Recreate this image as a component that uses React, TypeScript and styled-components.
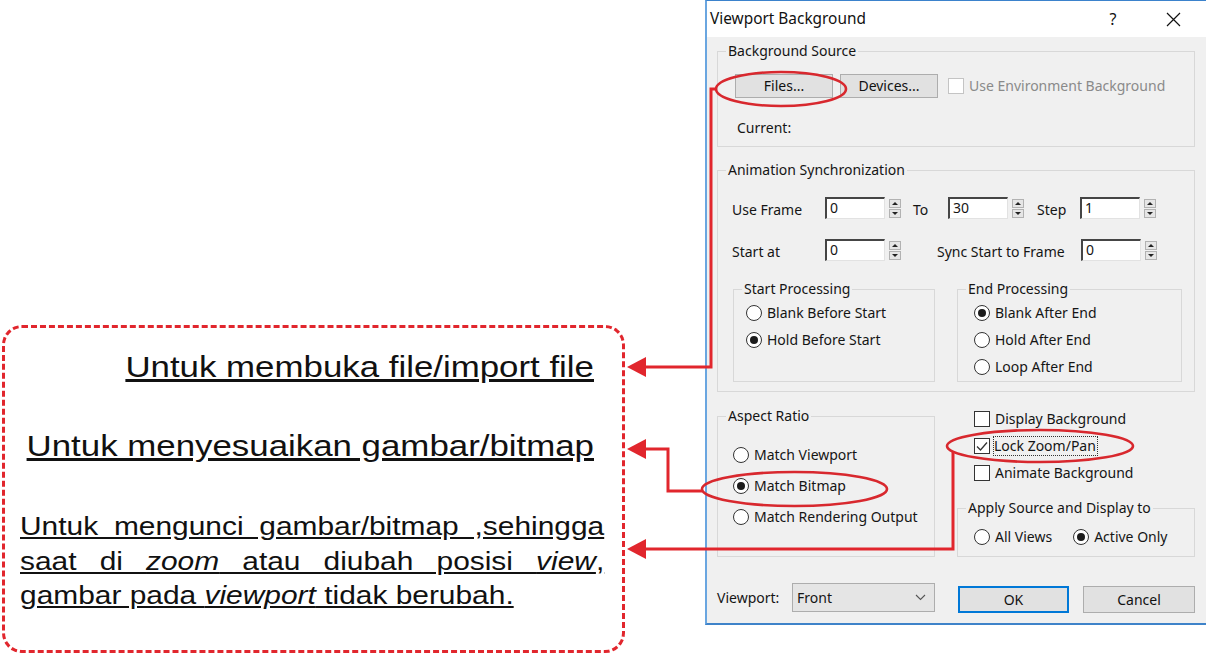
import * as React from "react";
import styled, { createGlobalStyle } from "styled-components";

const RED = "#e1262d";

const GlobalStyle = createGlobalStyle`
  html, body {
    margin: 0;
    padding: 0;
    background: #ffffff;
    overflow: hidden;
  }
  #root {
    width: 1206px;
    height: 657px;
  }
`;

const Check = () => (
  <svg width="14" height="14" viewBox="0 0 14 14">
    <path d="M2 7.5 L5.5 11 L12 3.5" fill="none" stroke="#333" strokeWidth="1.3" />
  </svg>
);

const Radio = ({ on, children }: { on?: boolean; children: React.ReactNode }) => (
  <Option>
    <RadioCircle $on={on} />
    <span>{children}</span>
  </Option>
);

const Field = (props: { label: string; w: number; ml?: number; value: string }) => (
  <>
    <FieldLabel $w={props.w} $ml={props.ml || 0}>
      {props.label}
    </FieldLabel>
    <ValueBox>{props.value}</ValueBox>
    <Spinner>
      <SpinHalf />
      <SpinHalf $down />
    </Spinner>
  </>
);

export default function App() {
  return (
    <Page>
      <GlobalStyle />
      <LeftColumn>
        <NoteBox>
          <Note $gap={0}>Untuk membuka file/import file</Note>
          <Note $gap={43}>Untuk menyesuaikan gambar/bitmap</Note>
          <NoteParagraph>
            <NoteLine>Untuk mengunci gambar/bitmap ,sehingga</NoteLine>
            <NoteLine>
              saat di <i>zoom</i> atau diubah posisi <i>view</i>,
            </NoteLine>
            <NoteLine $last>
              gambar pada <i>viewport</i> tidak berubah.
            </NoteLine>
          </NoteParagraph>
        </NoteBox>
      </LeftColumn>

      <Dialog>
        <TitleBar>
          <TitleText>Viewport Background</TitleText>
          <TitleButton $mr={14}>?</TitleButton>
          <TitleButton $mr={0}>
            <svg width="15" height="15" viewBox="0 0 15 15">
              <path d="M1 1 L14 14 M14 1 L1 14" stroke="#111" strokeWidth="1.2" />
            </svg>
          </TitleButton>
        </TitleBar>

        <Body>
          <Group>
            <Legend>Background Source</Legend>
            <SourceRow>
              <PushButton $w={98} $h={24}>Files...</PushButton>
              <PushButton $w={98} $h={24} style={{ marginLeft: 7 }}>
                Devices...
              </PushButton>
              <CheckBox $disabled style={{ marginLeft: 10 }} />
              <DisabledText>Use Environment Background</DisabledText>
            </SourceRow>
            <CurrentLine>Current:</CurrentLine>
          </Group>

          <Group $mt={14}>
            <Legend>Animation Synchronization</Legend>
            <SyncBody>
              <SpinRow $mt={0}>
                <Field label="Use Frame" w={93} value="0" />
                <Field label="To" w={35} ml={12} value="30" />
                <Field label="Step" w={43} ml={13} value="1" />
              </SpinRow>
              <SpinRow $mt={20}>
                <Field label="Start at" w={93} value="0" />
                <Field label="Sync Start to Frame" w={144} ml={36} value="0" />
              </SpinRow>
              <ProcessRow>
                <Group $w={202}>
                  <Legend>Start Processing</Legend>
                  <OptionList $pad="6px 0 5px 12px" $gap={9}>
                    <Radio>Blank Before Start</Radio>
                    <Radio on>Hold Before Start</Radio>
                  </OptionList>
                </Group>
                <Group $w={225}>
                  <Legend>End Processing</Legend>
                  <OptionList $pad="6px 0 5px 16px" $gap={9}>
                    <Radio on>Blank After End</Radio>
                    <Radio>Hold After End</Radio>
                    <Radio>Loop After End</Radio>
                  </OptionList>
                </Group>
              </ProcessRow>
            </SyncBody>
          </Group>

          <LowerRow>
            <Group $w={218}>
              <Legend>Aspect Ratio</Legend>
              <OptionList $pad="21px 0 0 15px" $gap={13}>
                <Radio>Match Viewport</Radio>
                <Radio on>Match Bitmap</Radio>
                <Radio>Match Rendering Output</Radio>
              </OptionList>
            </Group>
            <RightColumn>
              <OptionList $pad="0 0 0 17px" $gap={9}>
                <Option>
                  <CheckBox />
                  <span>Display Background</span>
                </Option>
                <Option>
                  <CheckBox>
                    <Check />
                  </CheckBox>
                  <FocusText>Lock Zoom/Pan</FocusText>
                </Option>
                <Option>
                  <CheckBox />
                  <span>Animate Background</span>
                </Option>
              </OptionList>
              <Group $mt={17}>
                <Legend>Apply Source and Display to</Legend>
                <ApplyRow>
                  <Radio>All Views</Radio>
                  <Radio on>Active Only</Radio>
                </ApplyRow>
              </Group>
            </RightColumn>
          </LowerRow>

          <BottomRow>
            <BottomLabel>Viewport:</BottomLabel>
            <Dropdown>
              <span>Front</span>
              <svg width="11" height="7" viewBox="0 0 11 7">
                <path d="M1 1 L5.5 5.5 L10 1" fill="none" stroke="#555" strokeWidth="1.1" />
              </svg>
            </Dropdown>
            <PushButton $w={111} $h={27} $default style={{ marginLeft: 23 }}>
              OK
            </PushButton>
            <PushButton $w={112} $h={27} style={{ marginLeft: 14 }}>
              Cancel
            </PushButton>
          </BottomRow>
        </Body>
      </Dialog>

      <Overlay width="1206" height="657" viewBox="0 0 1206 657">
        <g fill="none" stroke="#d8282e" strokeWidth="2.6">
          <ellipse cx="781" cy="89" rx="65" ry="17" />
          <ellipse cx="794.5" cy="489" rx="92.5" ry="17" />
          <ellipse cx="1040" cy="446" rx="93" ry="16" />
        </g>
        <g fill="none" stroke={RED} strokeWidth="3">
          <polyline points="716,89 711,89 711,367 644,367" />
          <polyline points="702,491 668,491 668,449 644,449" />
          <polyline points="953,452 953,549 644,549" />
        </g>
        <g fill={RED}>
          <polygon points="627,367 646,357 646,377" />
          <polygon points="627,449 646,439 646,459" />
          <polygon points="627,549 646,539 646,559" />
        </g>
      </Overlay>
    </Page>
  );
}

const Page = styled.div`
  position: relative;
  display: flex;
  align-items: flex-start;
  width: 1206px;
  height: 657px;
  overflow: hidden;
`;

const LeftColumn = styled.div`
  flex: none;
  width: 705px;
  padding: 325px 0 0 2px;
  box-sizing: border-box;
`;

const NoteBox = styled.div`
  box-sizing: border-box;
  width: 623px;
  height: 328px;
  border: 3px dashed ${RED};
  border-radius: 20px;
  padding: 21px 28px 0 15px;
  font-family: "Liberation Sans", Arial, sans-serif;
  color: #111;
`;

const Note = styled.p<{ $gap: number }>`
  margin: ${(p) => p.$gap}px 0 0;
  font-size: 30.3px;
  line-height: 36px;
  text-align: right;
  text-decoration: underline;
  transform: scaleX(1.15);
  transform-origin: right center;
`;

const NoteParagraph = styled.div`
  margin-top: 45px;
  width: 508px;
  font-size: 26px;
  line-height: 34.5px;
  transform: scaleX(1.15);
  transform-origin: left center;
`;

const NoteLine = styled.div<{ $last?: boolean }>`
  text-align: ${(p) => (p.$last ? "left" : "justify")};
  text-align-last: ${(p) => (p.$last ? "left" : "justify")};
  text-decoration: underline;
`;

const Dialog = styled.section`
  flex: none;
  box-sizing: border-box;
  width: 503px;
  height: 625px;
  display: flex;
  flex-direction: column;
  background: #f0f0f0;
  border-top: 1px solid #3b82cc;
  border-bottom: 2px solid #3f83c9;
  border-left: 2px solid #6aa6e0;
  font-family: "Noto Sans", "Open Sans", sans-serif;
  font-size: 14px;
  line-height: 18px;
  color: #151515;
`;

const TitleBar = styled.div`
  height: 36px;
  flex: none;
  display: flex;
  align-items: center;
  background: #ffffff;
  padding: 0 12px 0 3px;
`;

const TitleText = styled.div`
  flex: 1;
  font-size: 15.4px;
  color: #111;
`;

const TitleButton = styled.div<{ $mr: number }>`
  width: 46px;
  height: 36px;
  margin-right: ${(p) => p.$mr}px;
  display: flex;
  align-items: center;
  justify-content: center;
  font-size: 16px;
  color: #111;
`;

const Body = styled.div`
  display: flex;
  flex-direction: column;
  padding: 5px 13px 0 10px;
`;

const Group = styled.fieldset<{ $w?: number; $mt?: number }>`
  margin: ${(p) => p.$mt || 0}px 0 0;
  padding: 0;
  min-width: 0;
  box-sizing: border-box;
  border: 1px solid #d8d8d8;
  ${(p) => (p.$w ? `width: ${p.$w}px; flex: none;` : "")}
`;

const Legend = styled.legend`
  margin-left: 8px;
  padding: 0 2px;
  line-height: 18px;
`;

const SourceRow = styled.div`
  display: flex;
  align-items: center;
  padding: 14px 0 0 17px;
`;

const PushButton = styled.div<{ $w: number; $h: number; $default?: boolean }>`
  flex: none;
  box-sizing: border-box;
  width: ${(p) => p.$w}px;
  height: ${(p) => p.$h}px;
  display: flex;
  align-items: center;
  justify-content: center;
  background: #e1e1e1;
  border: ${(p) => (p.$default ? "2px solid #0078d7" : "1px solid #adadad")};
  color: #111;
`;

const CheckBox = styled.span<{ $disabled?: boolean }>`
  flex: none;
  box-sizing: border-box;
  width: 16px;
  height: 16px;
  display: flex;
  align-items: center;
  justify-content: center;
  background: #ffffff;
  border: 1px solid ${(p) => (p.$disabled ? "#c4c4c4" : "#333333")};
`;

const DisabledText = styled.span`
  margin-left: 5px;
  color: #8a8a8a;
`;

const CurrentLine = styled.div`
  padding: 21px 0 9px 19px;
`;

const SyncBody = styled.div`
  padding: 18px 0 9px 14px;
`;

const SpinRow = styled.div<{ $mt: number }>`
  display: flex;
  align-items: center;
  height: 22px;
  margin-top: ${(p) => p.$mt}px;
`;

const FieldLabel = styled.span<{ $w: number; $ml: number }>`
  flex: none;
  width: ${(p) => p.$w}px;
  margin-left: ${(p) => p.$ml}px;
  padding-top: 4px;
  white-space: nowrap;
`;

const ValueBox = styled.span`
  flex: none;
  box-sizing: border-box;
  width: 60px;
  height: 22px;
  padding: 0 0 0 3px;
  line-height: 17px;
  background: #ffffff;
  border-top: 2px solid #454545;
  border-left: 2px solid #454545;
  border-right: 1px solid #e2e2e2;
  border-bottom: 1px solid #e2e2e2;
`;

const Spinner = styled.span`
  flex: none;
  width: 12px;
  height: 19px;
  margin-left: 4px;
  display: flex;
  flex-direction: column;
  gap: 1px;
`;

const SpinHalf = styled.span<{ $down?: boolean }>`
  flex: 1;
  display: flex;
  align-items: center;
  justify-content: center;
  background: #e6e6e6;
  border: 1px solid #b2b2b2;

  &::after {
    content: "";
    border-left: 3px solid transparent;
    border-right: 3px solid transparent;
    ${(p) => (p.$down ? "border-top: 3px solid #222;" : "border-bottom: 3px solid #222;")}
  }
`;

const ProcessRow = styled.div`
  display: flex;
  align-items: stretch;
  gap: 22px;
  margin: 19px 0 0 1px;
`;

const OptionList = styled.div<{ $pad: string; $gap: number }>`
  display: flex;
  flex-direction: column;
  gap: ${(p) => p.$gap}px;
  padding: ${(p) => p.$pad};
`;

const Option = styled.div`
  display: flex;
  align-items: center;
  gap: 5px;
  height: 18px;
  white-space: nowrap;
`;

const RadioCircle = styled.span<{ $on?: boolean }>`
  flex: none;
  box-sizing: border-box;
  width: 16px;
  height: 16px;
  border: 1px solid #333333;
  border-radius: 50%;
  background: #ffffff;
  display: flex;
  align-items: center;
  justify-content: center;

  &::after {
    content: "";
    width: 8px;
    height: 8px;
    border-radius: 50%;
    background: ${(p) => (p.$on ? "#1c1c1c" : "transparent")};
  }
`;

const FocusText = styled.span`
  outline: 1px dotted #333;
  outline-offset: 0;
  padding: 0 1px 0 0;
  margin-left: -1px;
`;

const LowerRow = styled.div`
  display: flex;
  align-items: stretch;
  gap: 22px;
  margin-top: 15px;
`;

const RightColumn = styled.div`
  flex: none;
  width: 238px;
  display: flex;
  flex-direction: column;
  padding-top: 3px;
`;

const ApplyRow = styled.div`
  display: flex;
  gap: 21px;
  padding: 11px 0 10px 16px;
`;

const BottomRow = styled.div`
  display: flex;
  align-items: flex-end;
  height: 30px;
  margin-top: 26px;
`;

const BottomLabel = styled.span`
  flex: none;
  width: 75px;
  align-self: center;
`;

const Dropdown = styled.div`
  flex: none;
  box-sizing: border-box;
  width: 143px;
  height: 29px;
  margin-bottom: 1px;
  display: flex;
  align-items: center;
  justify-content: space-between;
  padding: 0 8px 0 4px;
  background: #e5e5e5;
  border: 1px solid #adadad;
`;

const Overlay = styled.svg`
  position: absolute;
  left: 0;
  top: 0;
  pointer-events: none;
`;
